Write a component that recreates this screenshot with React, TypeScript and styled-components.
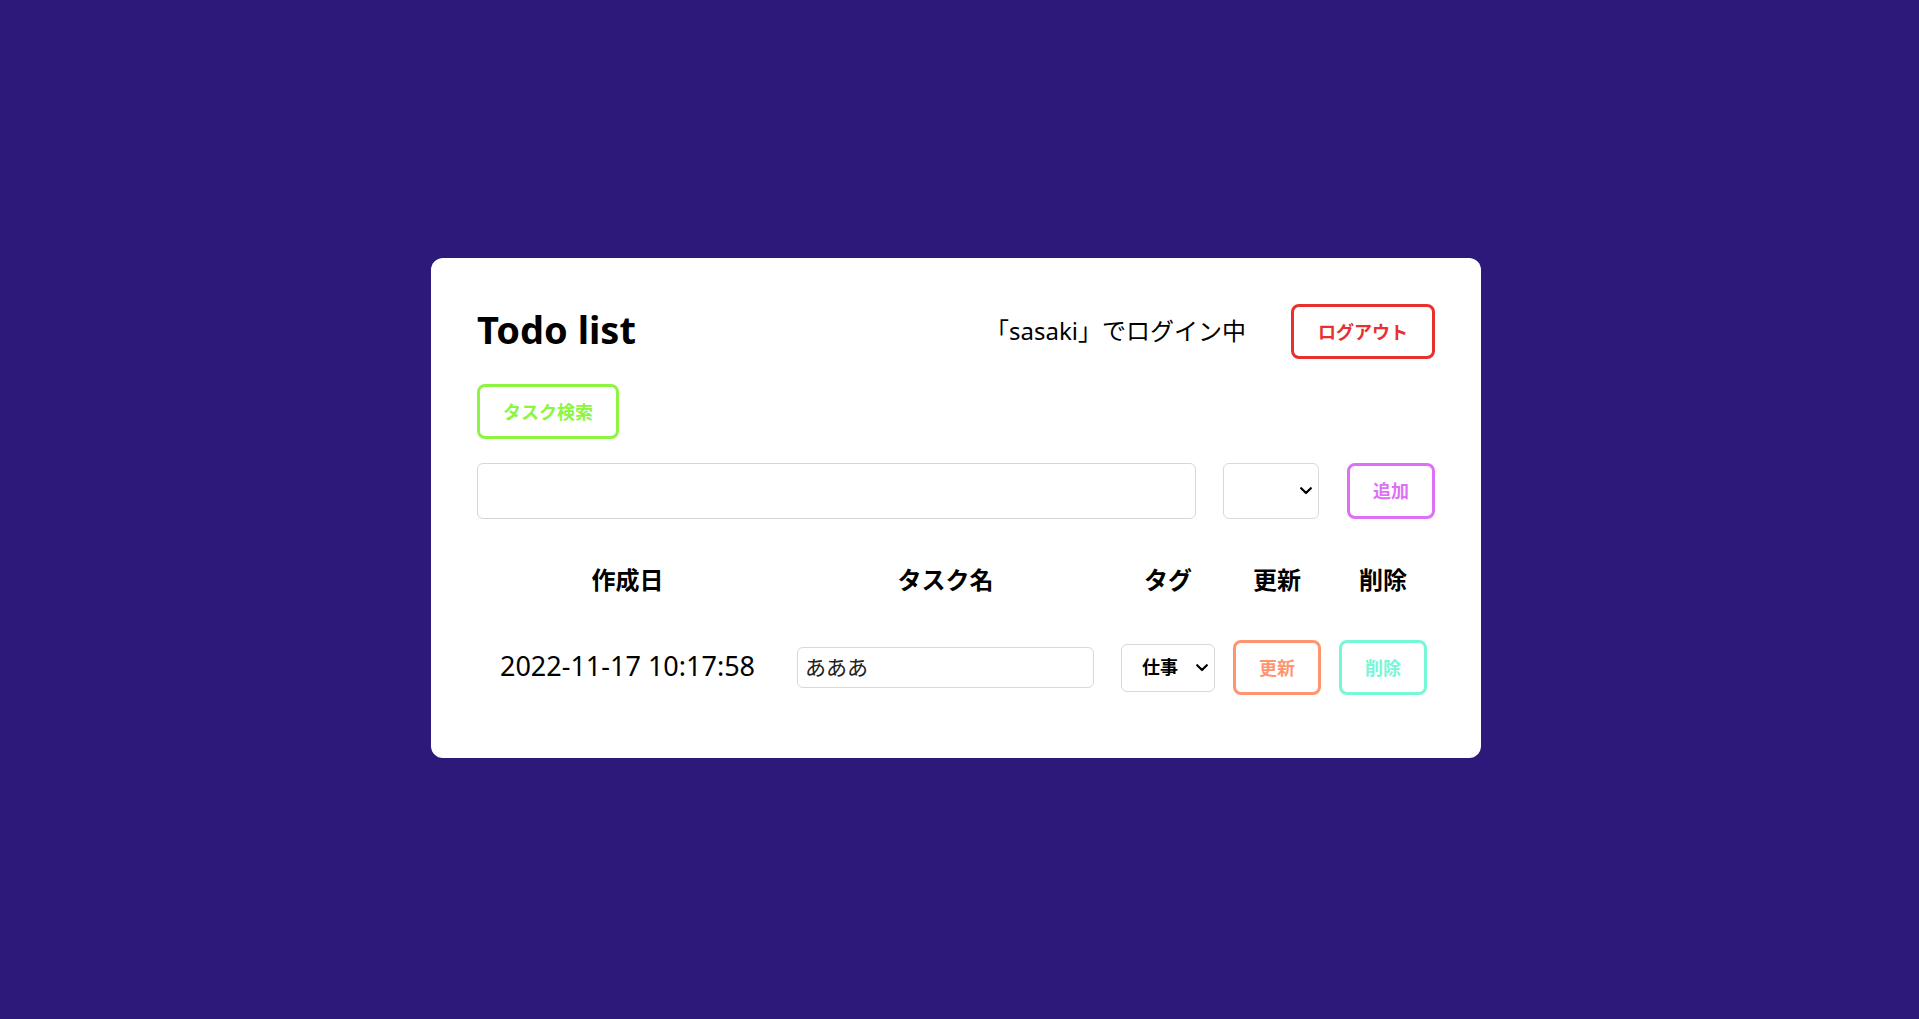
import styled, { createGlobalStyle } from 'styled-components'

const GlobalStyle = createGlobalStyle`
  html, body {
    margin: 0;
    padding: 0;
  }
  body {
    background-color: #2c197a;
    font-family: 'Noto Sans', 'Noto Sans CJK JP', sans-serif;
    color: #000;
  }
`

const Page = styled.div`
  min-height: 100vh;
  box-sizing: border-box;
  padding: 0 7px 3px 0;
  display: flex;
  align-items: center;
  justify-content: center;
`

const Card = styled.div`
  width: 1050px;
  box-sizing: border-box;
  padding: 46px;
  background-color: #fff;
  border-radius: 12px;
`

const Header = styled.div`
  display: flex;
  align-items: center;
  height: 55px;
`

const Title = styled.h1`
  margin: 0 auto 5px 0;
  font-size: 38px;
  font-weight: 700;
  line-height: 1;
`

const LoginUser = styled.span`
  margin: 0 45px 4px 0;
  font-size: 24px;
`

const OutlineButton = styled.button<{ $color: string; $width: number; $tall?: boolean }>`
  box-sizing: border-box;
  width: ${p => p.$width}px;
  height: ${p => (p.$tall ? 56 : 55)}px;
  padding: 0 0 2px;
  border: 3px solid ${p => p.$color};
  border-radius: 8px;
  background-color: #fff;
  color: ${p => p.$color};
  font-family: inherit;
  font-size: 18px;
  font-weight: 700;
  white-space: nowrap;
  cursor: pointer;
`

const SearchRow = styled.div`
  margin-top: 25px;
`

const AddRow = styled.div`
  display: flex;
  align-items: center;
  margin-top: 24px;
`

const TaskInput = styled.input`
  flex: 1;
  box-sizing: border-box;
  height: 56px;
  margin-right: 27px;
  padding: 0 10px;
  border: 1px solid #d6d6d6;
  border-radius: 6px;
  font-family: inherit;
  font-size: 21px;
`

const SelectWrap = styled.div<{ $width: number; $height: number; $gap?: number }>`
  position: relative;
  width: ${p => p.$width}px;
  height: ${p => p.$height}px;
  margin-right: ${p => p.$gap ?? 0}px;
`

const Select = styled.select`
  appearance: none;
  width: 100%;
  height: 100%;
  box-sizing: border-box;
  padding: 0 0 2px 20px;
  border: 1px solid #d9d9d9;
  border-radius: 6px;
  background-color: #fff;
  color: #000;
  font-family: inherit;
  font-size: 18px;
  font-weight: 700;
`

const Chevron = styled.svg`
  position: absolute;
  right: 7px;
  top: 50%;
  transform: translateY(-50%);
  pointer-events: none;
`

const Table = styled.div`
  margin-top: 34px;
`

const Row = styled.div<{ $head?: boolean }>`
  display: grid;
  grid-template-columns: 301px 335px 110px 108px 104px;
  align-items: center;
  justify-items: center;
  height: ${p => (p.$head ? '53px' : '55px')};
  padding: ${p => (p.$head ? '0' : '34px 0 17px')};
`

const HeadCell = styled.div`
  font-size: 24px;
  font-weight: 700;
  padding-bottom: 2px;
`

const DateCell = styled.div`
  font-size: 27px;
  white-space: nowrap;
  padding-bottom: 4px;
`

const NameInput = styled.input`
  box-sizing: border-box;
  width: 297px;
  height: 41px;
  padding: 0 7px 3px;
  border: 1px solid #d9d9d9;
  border-radius: 6px;
  font-family: inherit;
  font-size: 21px;
  color: #222;
`

const SelectBox: React.FC<{ width: number; height: number; gap?: number; value?: string }> = ({ width, height, gap, value }) => (
  <SelectWrap $width={width} $height={height} $gap={gap}>
    <Select defaultValue={value ?? ''}>
      <option value=''></option>
      <option value='仕事'>仕事</option>
      <option value='趣味'>趣味</option>
    </Select>
    <Chevron width='12' height='8' viewBox='0 0 12 8'>
      <polyline points='1.2,1.2 6,6 10.8,1.2' fill='none' stroke='#000' strokeWidth='2.2' strokeLinecap='round' strokeLinejoin='round' />
    </Chevron>
  </SelectWrap>
)

const App: React.FC = () => {
  return (
    <>
      <GlobalStyle />
      <Page>
        <Card>
          <Header>
            <Title>Todo list</Title>
            <LoginUser>「sasaki」でログイン中</LoginUser>
            <OutlineButton $color='#e8302f' $width={144}>ログアウト</OutlineButton>
          </Header>
          <SearchRow>
            <OutlineButton $color='#8cf542' $width={142}>タスク検索</OutlineButton>
          </SearchRow>
          <AddRow>
            <TaskInput type='text' />
            <SelectBox width={96} height={56} gap={28} />
            <OutlineButton $color='#de70f7' $width={88} $tall>追加</OutlineButton>
          </AddRow>
          <Table>
            <Row $head>
              <HeadCell>作成日</HeadCell>
              <HeadCell>タスク名</HeadCell>
              <HeadCell>タグ</HeadCell>
              <HeadCell>更新</HeadCell>
              <HeadCell>削除</HeadCell>
            </Row>
            <Row>
              <DateCell>2022-11-17 10:17:58</DateCell>
              <NameInput type='text' defaultValue='あああ' />
              <SelectBox width={94} height={48} value='仕事' />
              <OutlineButton $color='#ff9570' $width={88}>更新</OutlineButton>
              <OutlineButton $color='#76f7d6' $width={88}>削除</OutlineButton>
            </Row>
          </Table>
        </Card>
      </Page>
    </>
  )
}

export default App
